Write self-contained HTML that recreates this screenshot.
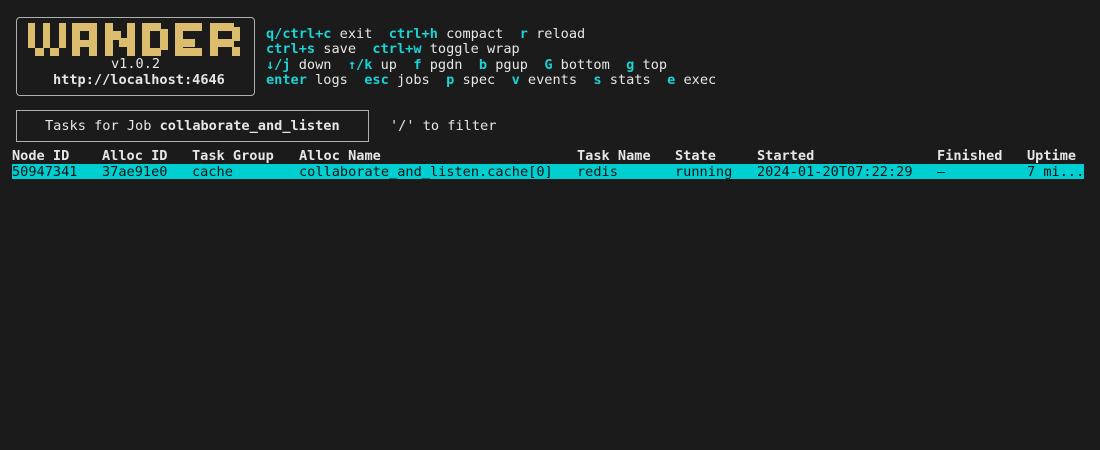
<!DOCTYPE html>
<html><head><meta charset="utf-8"><style>
html,body{margin:0;padding:0;background:#1b1b1b;width:1100px;height:450px;overflow:hidden}
body{font-family:"DejaVu Sans Mono","Liberation Mono",monospace;font-size:13.6px;color:#e6e6e6;position:relative}
.a{position:absolute;white-space:pre;line-height:16px}
.k{color:#19d3d6;font-weight:bold}
b{font-weight:bold}
.box{position:absolute;border:1.5px solid #b0b0b0;box-sizing:border-box}
.hl{position:absolute;left:12px;top:164px;width:1072px;height:15px;background:#00cfd2}
.h{font-weight:bold;color:#e6e6e6}
.r{color:#111}
</style></head><body>
<div class="box" style="left:16px;top:17px;width:239px;height:79px;border-radius:4px"></div>
<svg style="position:absolute;left:0;top:0" width="260" height="60" fill="#dcbd6e">
<rect x="28" y="23" width="7" height="25"/><rect x="43" y="23" width="7" height="25"/><rect x="59" y="23" width="7" height="25"/>
<rect x="35" y="48" width="9" height="8"/><rect x="50" y="48" width="9" height="8"/>
<rect x="72" y="23" width="25" height="8"/><rect x="72" y="23" width="8" height="33"/><rect x="89" y="23" width="8" height="33"/><rect x="72" y="40" width="25" height="7"/>
<rect x="105" y="23" width="8" height="33"/><rect x="127" y="23" width="8" height="33"/><rect x="113" y="31" width="8" height="9"/><rect x="119" y="38" width="8" height="9"/>
<rect x="142" y="23" width="8" height="33"/><rect x="142" y="23" width="19" height="8"/><rect x="142" y="48" width="19" height="8"/><rect x="160" y="29" width="8" height="21"/>
<rect x="175" y="23" width="8" height="33"/><rect x="175" y="23" width="27" height="8"/><rect x="175" y="39" width="20" height="8"/><rect x="175" y="48" width="27" height="8"/>
<rect x="210" y="23" width="8" height="33"/><rect x="210" y="23" width="24" height="8"/><rect x="232" y="27" width="8" height="14"/><rect x="210" y="39" width="24" height="8"/><rect x="232" y="47" width="8" height="9"/>
</svg>
<div class="a" style="left:111px;top:56px">v1.0.2</div>
<div class="a" style="left:53px;top:72px"><b>http://localhost:4646</b></div>

<div class="a" style="left:266px;top:26px"><span class="k">q/ctrl+c</span> exit  <span class="k">ctrl+h</span> compact  <span class="k">r</span> reload</div>
<div class="a" style="left:266px;top:41px"><span class="k">ctrl+s</span> save  <span class="k">ctrl+w</span> toggle wrap</div>
<div class="a" style="left:266px;top:57px"><span class="k">↓/j</span> down  <span class="k">↑/k</span> up  <span class="k">f</span> pgdn  <span class="k">b</span> pgup  <span class="k">G</span> bottom  <span class="k">g</span> top</div>
<div class="a" style="left:266px;top:72px"><span class="k">enter</span> logs  <span class="k">esc</span> jobs  <span class="k">p</span> spec  <span class="k">v</span> events  <span class="k">s</span> stats  <span class="k">e</span> exec</div>

<div class="box" style="left:16px;top:110px;width:353px;height:32px"></div>
<div class="a" style="left:45px;top:118px">Tasks for Job <b>collaborate_and_listen</b></div>
<div class="a" style="left:390px;top:118px">'/' to filter</div>

<div class="hl"></div>
<div class="a h" style="left:12px;top:148px">Node ID</div>
<div class="a h" style="left:102px;top:148px">Alloc ID</div>
<div class="a h" style="left:192px;top:148px">Task Group</div>
<div class="a h" style="left:299px;top:148px">Alloc Name</div>
<div class="a h" style="left:577px;top:148px">Task Name</div>
<div class="a h" style="left:675px;top:148px">State</div>
<div class="a h" style="left:757px;top:148px">Started</div>
<div class="a h" style="left:937px;top:148px">Finished</div>
<div class="a h" style="left:1027px;top:148px">Uptime</div>

<div class="a r" style="left:12px;top:164px">50947341</div>
<div class="a r" style="left:102px;top:164px">37ae91e0</div>
<div class="a r" style="left:192px;top:164px">cache</div>
<div class="a r" style="left:299px;top:164px">collaborate_and_listen.cache[0]</div>
<div class="a r" style="left:577px;top:164px">redis</div>
<div class="a r" style="left:675px;top:164px">running</div>
<div class="a r" style="left:757px;top:164px">2024-01-20T07:22:29</div>
<div class="a r" style="left:937px;top:164px">–</div>
<div class="a r" style="left:1027px;top:164px">7 mi...</div>
</body></html>
